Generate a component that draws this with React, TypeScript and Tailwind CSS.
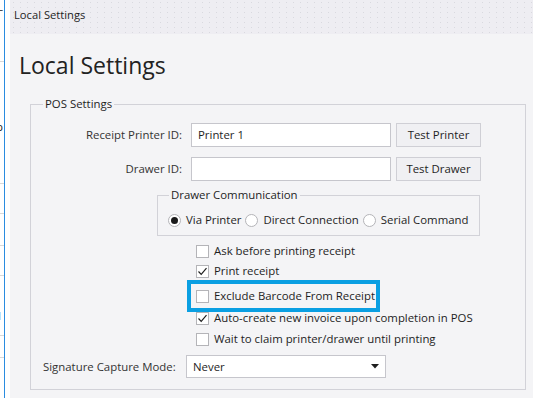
import React from "react";

const font = { fontFamily: '"Open Sans", "Noto Sans", sans-serif' };

function Checkbox({ checked }: { checked?: boolean }) {
  return (
    <div className="w-[13px] h-[13px] border border-[#b4b4b8] bg-white flex items-center justify-center shrink-0">
      {checked && (
        <svg width="11" height="11" viewBox="0 0 11 11">
          <path d="M1.5 5.5 L4.2 8.3 L9.5 2.2" fill="none" stroke="#1e1e1e" strokeWidth="1.2" />
        </svg>
      )}
    </div>
  );
}

function Radio({ checked }: { checked?: boolean }) {
  return (
    <div className="w-[13px] h-[13px] rounded-full border border-[#b4b4b8] bg-white flex items-center justify-center shrink-0">
      {checked && <div className="w-[7px] h-[7px] rounded-full bg-[#1a1a1a]" />}
    </div>
  );
}

function CheckRow({ label, checked }: { label: string; checked?: boolean }) {
  return (
    <div className="h-[20px] flex items-center gap-[5px] whitespace-nowrap">
      <Checkbox checked={checked} />
      <span>{label}</span>
    </div>
  );
}

export default function App() {
  return (
    <div className="w-[533px] h-[398px] overflow-hidden flex bg-white text-[11.4px] text-[#1e1e1e] whitespace-nowrap" style={font}>
      {/* left strip */}
      <div className="w-[10px] h-full flex shrink-0">
        <div className="w-[4px] h-full overflow-hidden flex flex-col bg-white text-[#222]">
          <div className="h-[14px] -ml-[3px] leading-[14px]">L</div>
          <div className="h-[48px] border-b border-[#d8d8d8]" />
          <div className="h-[58px]" />
          <div className="h-[14px] -ml-[4px] leading-[14px]">p</div>
          <div className="h-[50px] border-b border-[#d8d8d8]" />
          <div className="h-[30px] border-b border-[#d8d8d8]" />
          <div className="h-[32px] border-b border-[#d8d8d8]" />
          <div className="h-[30px] border-b border-[#d8d8d8]" />
          <div className="h-[40px] -ml-[4px] leading-[80px]">1</div>
          <div className="h-[20px] border-b border-[#d8d8d8]" />
          <div className="h-[22px] border-b border-[#d8d8d8]" />
        </div>
        <div className="w-[1px] h-full bg-[#2a8ce0]" />
        <div className="w-[5px] h-full bg-white" />
      </div>

      {/* window */}
      <div className="flex-1 flex flex-col">
        <div className="h-[34px] pl-[4px] pt-[7px] bg-[#eeedf2] bg-[radial-gradient(#d9d9df_0.7px,transparent_0.8px)] bg-[size:7px_5px] text-[11.2px] text-[#1e1e1e]">
          Local Settings
        </div>
        <div className="flex-1 bg-[#f4f4f6] pl-[9px] pt-[14px]">
          <div className="text-[23px] leading-[34px] text-[#222] h-[49px]">Local Settings</div>
          <fieldset className="ml-[11px] w-[496px] border border-[#d2d2d8] pb-[11px]">
            <legend className="ml-[12px] px-[2px] leading-[14px]">POS Settings</legend>
            <div className="mt-[12px] flex items-center">
              <div className="w-[151px] text-right text-[#333]">Receipt Printer ID:</div>
              <div className="ml-[9px] w-[200px] h-[24px] border border-[#c6c6cc] bg-white flex items-center px-[6px]">Printer 1</div>
              <div className="ml-[5px] w-[85px] h-[24px] border border-[#cfcfd5] bg-[#f0f0f3] flex items-center justify-center">Test Printer</div>
            </div>
            <div className="mt-[10px] flex items-center">
              <div className="w-[151px] text-right text-[#333]">Drawer ID:</div>
              <div className="ml-[9px] w-[200px] h-[24px] border border-[#c6c6cc] bg-white" />
              <div className="ml-[5px] w-[85px] h-[24px] border border-[#cfcfd5] bg-[#f0f0f3] flex items-center justify-center">Test Drawer</div>
            </div>
            <fieldset className="mt-[7px] ml-[126px] w-[323px] border border-[#d2d2d8] pb-[6px]">
              <legend className="ml-[11px] px-[2px] leading-[14px]">Drawer Communication</legend>
              <div className="flex items-center pl-[10px] pt-[9px] h-[27px]">
                <Radio checked />
                <span className="ml-[5px]">Via Printer</span>
                <div className="ml-[4px]"><Radio /></div>
                <span className="ml-[5px]">Direct Connection</span>
                <div className="ml-[4px]"><Radio /></div>
                <span className="ml-[5px]">Serial Command</span>
              </div>
            </fieldset>
            <div className="ml-[165px] mt-[5px] flex flex-col">
              <CheckRow label="Ask before printing receipt" />
              <CheckRow label="Print receipt" checked />
              <div className="mt-[-1px] mb-[-4px] -ml-[9px] w-[193px] border-4 border-[#0a9fe2] pl-[5px] py-[2px]">
                <CheckRow label="Exclude Barcode From Receipt" />
              </div>
              <CheckRow label="Auto-create new invoice upon completion in POS" checked />
              <div className="mt-[1px]"><CheckRow label="Wait to claim printer/drawer until printing" /></div>
            </div>
            <div className="mt-[6px] flex items-center">
              <div className="ml-[12px] w-[143px] text-[#333]">Signature Capture Mode:</div>
              <div className="w-[200px] h-[23px] border border-[#c6c6cc] bg-white flex items-center justify-between pl-[6px] pr-[6px]">
                <span>Never</span>
                <svg width="8" height="5" viewBox="0 0 8 5"><path d="M0 0 L8 0 L4 4.5 Z" fill="#1e1e1e" /></svg>
              </div>
            </div>
          </fieldset>
        </div>
      </div>
    </div>
  );
}
